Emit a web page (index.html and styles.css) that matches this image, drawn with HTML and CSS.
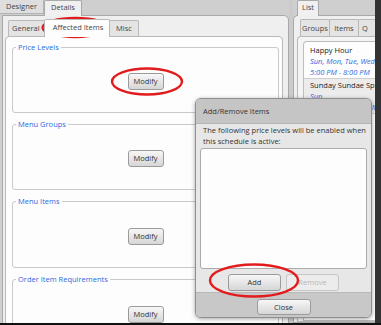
FILE: index.html
```html
<!DOCTYPE html>
<html>
<head>
<meta charset="utf-8">
<link rel="stylesheet" href="styles.css">
</head>
<body>
<div class="app">
  <div class="main">
    <section class="pane left-pane">
      <div class="tabrow top-tabs">
        <div class="tab w-designer">Designer</div>
        <div class="tab sel w-details">Details</div>
      </div>
      <div class="pane-body">
        <div class="tabrow inner-tabs">
          <div class="itab w-general">General</div>
          <div class="itab sel w-affected">Affected Items</div>
          <div class="itab w-misc">Misc</div>
        </div>
        <div class="content">
          <fieldset class="group g1"><legend>Price Levels</legend><div class="group-body"><button class="btn modify">Modify</button></div></fieldset>
          <fieldset class="group g2"><legend>Menu Groups</legend><div class="group-body"><button class="btn modify">Modify</button></div></fieldset>
          <fieldset class="group g3"><legend>Menu Items</legend><div class="group-body"><button class="btn modify">Modify</button></div></fieldset>
          <fieldset class="group g4"><legend>Order Item Requirements</legend><div class="group-body"><button class="btn modify">Modify</button></div></fieldset>
        </div>
      </div>
    </section>
    <div class="splitter"></div>
    <section class="pane right-pane">
      <div class="tabrow top-tabs">
        <div class="tab sel w-list">List</div>
      </div>
      <div class="pane-body rbody">
        <div class="tabrow inner-tabs rtabs">
          <div class="itab w-groups">Groups</div>
          <div class="itab w-items">Items</div>
          <div class="itab w-q">Q</div>
        </div>
        <div class="rpanel">
          <div class="listbox">
            <div class="item">
              <div class="name">Happy Hour</div>
              <div class="when">Sun, Mon, Tue, Wed, Thu, Fri, Sat</div>
              <div class="when">5:00 PM - 8:00 PM</div>
            </div>
            <div class="item alt">
              <div class="name">Sunday Sundae Special</div>
              <div class="when">Sun</div>
              <div class="when">10:00 AM - 11:00 PM</div>
            </div>
          </div>
        </div>
      </div>
    </section>
    <div class="edge"></div>
  </div>
  <div class="bottom"></div>

  <div class="dialog">
    <div class="dlg-head">Add/Remove Items</div>
    <div class="dlg-body">
      <p class="dlg-text">The following price levels will be enabled when<br>this schedule is active:</p>
      <div class="dlg-list"></div>
      <div class="dlg-actions">
        <button class="btn dbtn">Add</button>
        <button class="btn dbtn disabled">Remove</button>
      </div>
    </div>
    <div class="dlg-foot"><button class="btn dbtn close">Close</button></div>
  </div>

  <svg class="marks" width="381" height="325" viewBox="0 0 381 325">
    <ellipse cx="75.5" cy="27.5" rx="33" ry="9.5" />
    <ellipse cx="147" cy="81.5" rx="35" ry="13" />
    <ellipse cx="254" cy="280.5" rx="44" ry="16" />
  </svg>
</div>
</body>
</html>
```
FILE: styles.css
```css
* { box-sizing: border-box; }
html, body { margin: 0; padding: 0; }
body {
  width: 381px; height: 325px; overflow: hidden;
  font-family: "Open Sans", "Segoe UI", sans-serif;
  font-size: 7.5px; color: #333; background: #111;
}
.app { position: relative; width: 381px; height: 325px; display: flex; flex-direction: column; }
.main { height: 323px; display: flex; background: #cfcfcf; overflow: hidden; }
.bottom { height: 2px; background: #111; }

.pane { display: flex; flex-direction: column; }
.left-pane { width: 289px; }
.splitter { width: 4px; background: #cbcbcb; }
.right-pane { width: 82px; overflow: hidden; }
.edge { width: 6px; background: #333; }

.tabrow { display: flex; align-items: flex-start; }
.top-tabs { height: 15px; }
.tab {
  height: 14px; line-height: 13px; text-align: center; color: #444;
  background: #dedede; border: 1px solid #b3b3b3; border-top: 0;
  white-space: nowrap;
}
.tab.sel {
  height: 16px; background: #f0f0f0; border-color: #a9a9a9; border-bottom: 0;
  border-top: 1px solid #a9a9a9; border-radius: 2px 2px 0 0;
  position: relative; z-index: 2;
}
.w-designer { width: 44px; border-left: 0; }
.w-details { width: 38px; }
.w-list { width: 22px; margin-left: 4px; }

.pane-body {
  flex: 1; background: #efefef; border: 1px solid #a9a9a9;
  border-radius: 0 5px 0 0; margin-left: 2px;
  padding: 4px 0 0 2px; display: flex; flex-direction: column;
}
.inner-tabs { height: 16px; margin-left: 3px; }
.itab {
  height: 16px; line-height: 15px; text-align: center; color: #444;
  background: #e4e4e4; border: 1px solid #b9b9b9; border-bottom: 0;
  border-radius: 2px 2px 0 0; margin-right: -1px; white-space: nowrap;
}
.itab.sel {
  height: 18px; margin-top: -1px; background: #fdfdfd; position: relative; z-index: 2;
}
.w-general { width: 37px; text-align: left; padding-left: 3px; }
.w-affected { width: 66px; padding-left: 2px; }
.w-misc { width: 30px; }

.content {
  width: 278px; flex: 1; background: #fdfdfd; border: 1px solid #b9b9b9;
  border-radius: 4px 4px 0 0; padding: 5px 0 0 6px;
  display: flex; flex-direction: column; gap: 6px;
}
.group {
  margin: 0; padding: 0; width: 267px; height: 71px;
  border: 1px solid #cacaca; border-radius: 3px;
  min-width: 0;
}
.group legend {
  padding: 0 2px; margin-left: 3px; color: #2c6be0; line-height: 10px; font-size: 7.5px;
}
.group-body { height: 59px; display: flex; align-items: center; justify-content: center; }
.g3, .g4 { height: 72px; }
.g3 .group-body, .g4 .group-body { height: 60px; }

.btn {
  font-family: inherit; font-size: 7.5px; color: #333; padding: 0;
  height: 17px; line-height: 15px;
  background: linear-gradient(#f7f7f7, #d6d6d6);
  border: 1px solid #9b9b9b; border-radius: 3px;
}
.modify { width: 36px; }

/* right pane */
.rbody { margin-left: 0; border-radius: 5px 0 0 0; border-right: 0; padding: 3px 0 0 3px; }
.rtabs { height: 17px; margin-left: 3px; }
.rtabs .itab { height: 17px; line-height: 16px; }
.w-groups { width: 34px; }
.w-items { width: 34px; }
.w-q { width: 20px; text-align: left; padding-left: 3px; }
.rpanel {
  flex: 1; background: #f4f4f4; border: 1px solid #b9b9b9; border-right: 0;
  border-radius: 4px 0 0 0; padding: 4px 0 0 5px; display: flex; flex-direction: column;
}
.listbox {
  flex: 1; background: #fdfdfd; border: 1px solid #bdbdbd; border-right: 0;
  border-radius: 4px 0 0 0; overflow: hidden;
}
.item { padding: 3px 0 0 6px; border-bottom: 1px solid #cfcfcf; white-space: nowrap; }
.item.alt { background: #ececec; padding-top: 1px; }
.name { line-height: 11px; color: #222; }
.when { line-height: 11px; color: #2c6be0; font-style: italic; }

/* dialog */
.dialog {
  position: absolute; left: 195px; top: 98px; width: 177px; height: 220px;
  border: 1px solid #8f8f8f; border-radius: 6px; overflow: hidden;
  box-shadow: 0 1px 4px rgba(0,0,0,0.35);
  display: flex; flex-direction: column; background: #e7e7e7;
}
.dlg-head {
  height: 25px; line-height: 24px; padding-left: 7px; background: #c5c5c5;
  border-bottom: 1px solid #b4b4b4; color: #333;
}
.dlg-body { flex: 1; padding: 0 4px 0 4px; display: flex; flex-direction: column; }
.dlg-text { margin: 1px 0 0 0; padding-left: 3px; line-height: 11px; color: #333; white-space: nowrap; }
.dlg-list {
  height: 121px; margin-top: 1px; background: #fdfdfd;
  border: 1px solid #ababab; border-radius: 3px;
}
.dlg-actions { display: flex; justify-content: center; gap: 5px; margin-top: 5px; }
.dbtn { width: 53px; }
.dbtn.disabled { background: #ececec; border-color: #c6c6c6; color: #b8b8b8; }
.dlg-foot {
  height: 25px; background: #c8c8c8; border-top: 1px solid #b8b8b8;
  display: flex; justify-content: center; padding-top: 6px;
}
.close { width: 54px; height: 16px; }

.marks { position: absolute; left: 0; top: 0; pointer-events: none; }
.marks ellipse { fill: none; stroke: #e21c1c; stroke-width: 2.4; }
```
